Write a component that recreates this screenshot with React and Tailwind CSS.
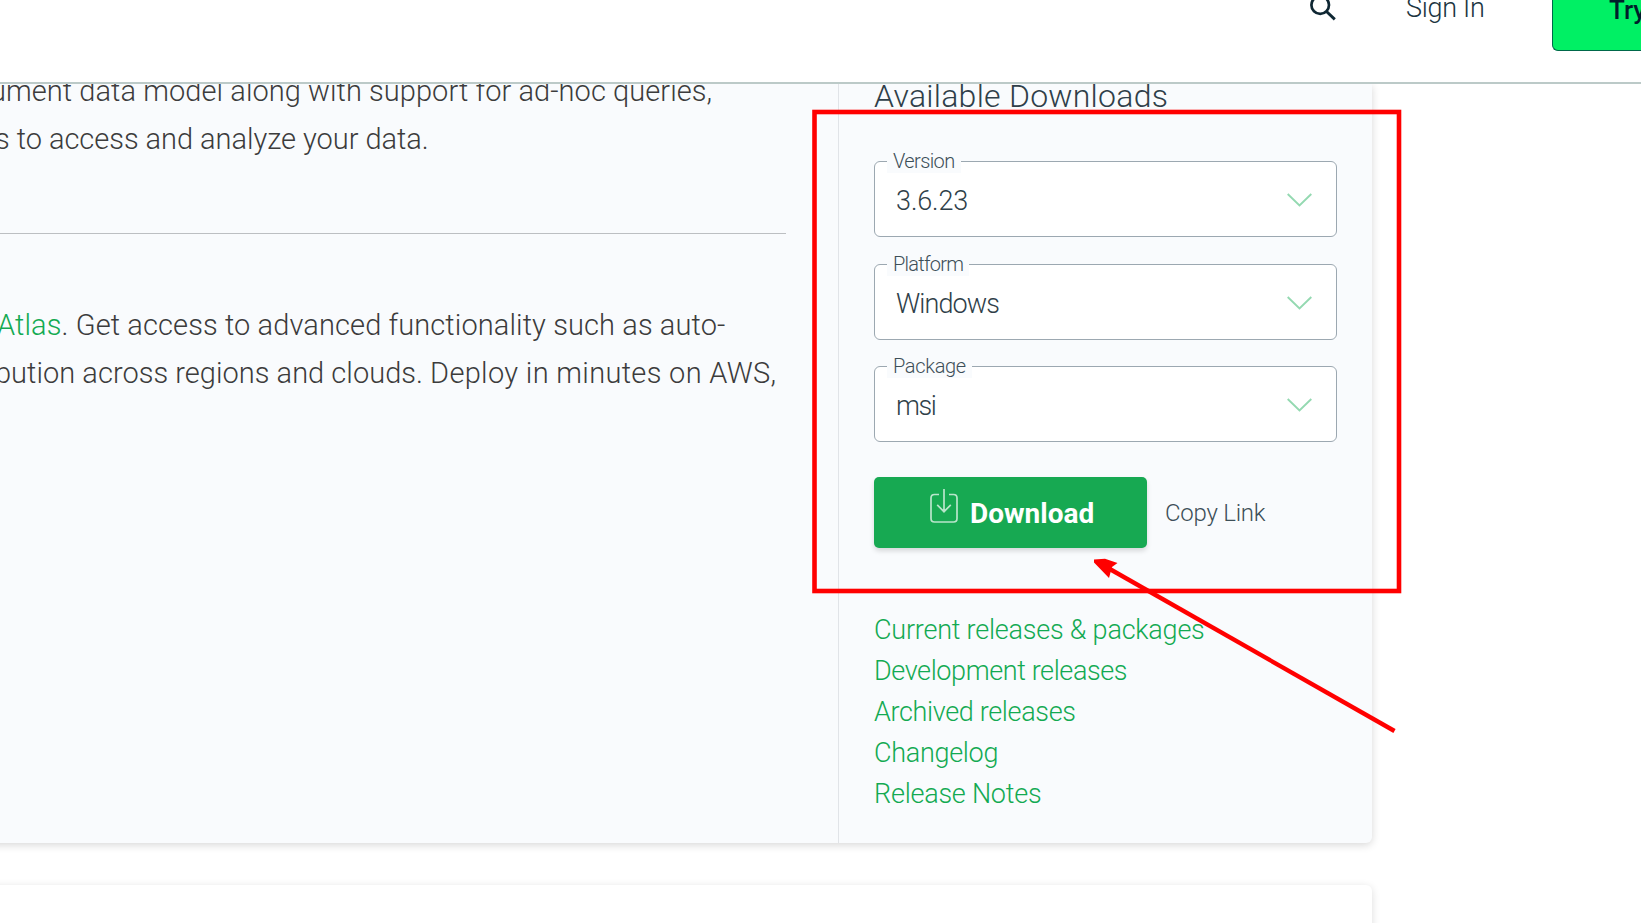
import React from "react";

const fields = [
  { label: "Version", value: "3.6.23", labelClass: "tracking-[-0.6px]", valueClass: "tracking-[-0.1px]" },
  { label: "Platform", value: "Windows", labelClass: "tracking-[-0.75px]", valueClass: "tracking-[-0.9px]" },
  { label: "Package", value: "msi", labelClass: "tracking-[-0.35px]", valueClass: "tracking-[-1.4px]" },
];

const links = [
  { text: "Current releases & packages", className: "tracking-[-0.22px]" },
  { text: "Development releases", className: "tracking-[-0.4px]" },
  { text: "Archived releases", className: "tracking-[-0.35px]" },
  { text: "Changelog", className: "tracking-[-0.3px]" },
  { text: "Release Notes", className: "tracking-[-0.24px]" },
];

function SelectField({ label, value, labelClass, valueClass }) {
  return (
    <div className="relative flex h-[76px] w-[463px] items-center justify-between rounded-[6px] border border-[#9ca8b1] bg-white pr-[24px] pl-[21px]">
      <span
        className={
          "absolute top-[-13px] left-[12px] bg-[#f9fbfd] pr-[6px] pl-[6px] text-[20px] leading-[24px] text-[#3d4f58] " +
          labelClass
        }
      >
        {label}
      </span>
      <span className={"pt-[4px] text-[27px] leading-[36px] text-[#2f3f49] " + valueClass}>{value}</span>
      <svg className="mt-[2px]" width="25" height="14" viewBox="0 0 25 14" fill="none">
        <path d="M0.7 1L12.5 12.5L24.3 1" stroke="#94d9b1" strokeWidth="1.9" />
      </svg>
    </div>
  );
}

function Header() {
  return (
    <header className="relative z-10 flex h-[84px] shrink-0 items-start justify-end border-b-2 border-[#bccac8] bg-white">
      <svg className="mt-[-7px] mr-[69px]" width="28" height="28" viewBox="0 0 28 28" fill="none">
        <circle cx="11.2" cy="12" r="8.8" stroke="#0f2733" strokeWidth="2.7" />
        <path d="M17.5 18.5L25.8 26.4" stroke="#0f2733" strokeWidth="2.9" />
      </svg>
      <span className="mt-[-10px] w-[146px] text-[27px] leading-[36px] tracking-[-0.3px] text-[#1c3541]">Sign In</span>
      <div className="mt-[-20px] h-[71px] w-[89px] rounded-bl-[6px] border-b border-l border-[#00684a] bg-[#00f064] pt-[12px] pl-[56px] text-[26px] leading-[36px] font-medium whitespace-nowrap text-[#001e2b]">
        Try
      </div>
    </header>
  );
}

export default function App() {
  return (
    <div className="relative flex h-[923px] w-[1641px] flex-col overflow-hidden bg-white font-['Roboto','Liberation_Sans',sans-serif] font-light">
      <Header />
      <main className="ml-[-20px] flex w-[1392px] flex-col">
        <section className="flex h-[759px] rounded-b-[6px] bg-[#f9fbfd] shadow-[0_2px_8px_rgba(0,0,0,0.16)]">
          <div className="w-[858px] overflow-hidden pl-[20px] text-[29px] leading-[48px] whitespace-nowrap text-[#3c3c3c]">
            <div className="mt-[-17px]">
              <p className="ml-[-10px] tracking-[0.06px]">ument data model along with support for ad-hoc queries,</p>
              <p className="ml-[-5px] tracking-[-0.04px]">s to access and analyze your data.</p>
            </div>
            <hr className="mt-[70px] w-[786px] border-t border-[#bcbfc2]" />
            <div className="mt-[67px]">
              <p className="ml-[-3px] tracking-[0.1px]">
                <span className="text-[#13aa52]">Atlas</span>. Get access to advanced functionality such as auto-
              </p>
              <p className="ml-[-5px] tracking-[0.03px]">
                bution across regions and clouds. <span className="tracking-[0.32px]">Deploy in minutes on AWS,</span>
              </p>
            </div>
          </div>
          <aside className="flex w-[534px] flex-col border-l border-[#e1e4e8] pl-[35px]">
            <h2 className="mt-[-8px] text-[32px] leading-[40px] tracking-[0.26px] text-[#2f3f49]">Available Downloads</h2>
            <div className="mt-[45px] flex flex-col gap-[26.5px]">
              {fields.map((f) => (
                <SelectField key={f.label} {...f} />
              ))}
            </div>
            <div className="mt-[35px] flex items-center">
              <button className="flex h-[71px] w-[273px] items-center rounded-[5px] bg-[#17a952] pl-[56px] text-white shadow-[0_3px_5px_rgba(0,0,0,0.14)]">
                <svg className="mt-[-13px]" width="28" height="36" viewBox="0 0 28 36" fill="none" stroke="#b9e5cb" strokeWidth="1.7">
                  <path d="M9 6.5H4.5Q1 6.5 1 10V30.5Q1 34 4.5 34H23.5Q27 34 27 30.5V10Q27 6.5 23.5 6.5H19" />
                  <path d="M14 1V23.5M7.2 16.8L14 23.7L20.8 16.8" />
                </svg>
                <span className="ml-[12px] pt-[2px] text-[28px] leading-[36px] font-bold">Download</span>
              </button>
              <span className="ml-[18px] pt-[1px] text-[24px] leading-[36px] tracking-[-0.25px] text-[#3d4f58]">Copy Link</span>
            </div>
            <nav className="mt-[62px] flex flex-col text-[27px] leading-[41px] text-[#13aa52]">
              {links.map((l) => (
                <a key={l.text} className={l.className}>
                  {l.text}
                </a>
              ))}
            </nav>
          </aside>
        </section>
        <section className="mt-[42px] h-[60px] rounded-t-[6px] bg-white shadow-[0_2px_9px_rgba(0,0,0,0.14)]" />
      </main>
      <svg className="absolute top-0 left-0 z-20" width="1641" height="923" fill="none">
        <rect x="814.5" y="112" width="584.5" height="479" stroke="#f00" strokeWidth="4.6" />
        <path d="M1108 568L1394.5 731" stroke="#f00" strokeWidth="4.4" />
        <path d="M1094 559.5L1105 558.8L1117.5 563L1112 567L1109 578L1094 562.5Z" fill="#f00" />
      </svg>
    </div>
  );
}
